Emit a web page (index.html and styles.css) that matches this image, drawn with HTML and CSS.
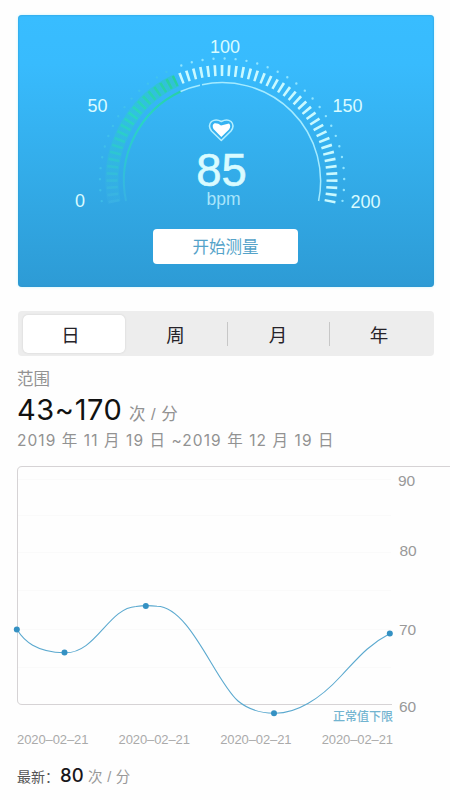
FILE: index.html
```html
<!DOCTYPE html>
<html lang="zh-CN">
<head>
<meta charset="utf-8">
<title>心率</title>
<link rel="stylesheet" href="styles.css">
</head>
<body>
<main class="page">
  <section class="card">
    <svg class="gauge" viewBox="18 15 416 214" width="416" height="214">
      <defs>
        <linearGradient id="fade" gradientUnits="userSpaceOnUse" x1="110" y1="205" x2="176" y2="80">
          <stop offset="0" stop-color="#3fb4e6" stop-opacity=".5"/>
          <stop offset=".3" stop-color="#2ec4d4"/>
          <stop offset=".65" stop-color="#29d6c2"/>
          <stop offset="1" stop-color="#27cfa0"/>
        </linearGradient>
      </defs>
      <path class="band" d="M114.2 202.4A110 110 0 0 1 176.3 80.4"/>
      <path class="ticks ticks-on" d="M114.2 202.4A110 110 0 0 1 176.3 80.4"/>
      <path class="ticks" d="M180.3 78.7A110 110 0 0 1 329.8 202.4"/>
      <path class="dots dots-on" d="M101.7 201.1A122 122 0 0 1 171 69.7"/>
      <path class="dots" d="M181.3 65.5A122 122 0 0 1 342.4 201.4"/>
      <path class="arc arc-on" d="M126 201A98.5 98.5 0 0 1 180.6 91.5"/>
      <path class="arc" d="M180.6 91.5A98.5 98.5 0 0 1 200 85.2"/>
      <path class="arc" d="M202 84.7A98.5 98.5 0 0 1 318.6 201"/>
      <text class="mark" x="80" y="207">0</text>
      <text class="mark" x="97.5" y="111.5">50</text>
      <text class="mark" x="225" y="53">100</text>
      <text class="mark" x="347.5" y="111.5">150</text>
      <text class="mark" x="365.5" y="208">200</text>
      <path class="heart-line" d="M221.3 140.5L211.5 131Q207.500 125.500 211.500 121.500Q216 118.300 221.300 121.500Q227 118.300 231 121.500Q235 125.500 231 131Z"/>
      <path class="heart" d="M221.300 137L213.500 129Q211.500 125 214.500 123.200Q218 122.800 221 125.500Q225 124.500 229 123.500Q231.500 126 229 129.500Z"/>
      <text class="value" x="221.500" y="185.500">85</text>
      <text class="unit" x="223.500" y="204.500">bpm</text>
    </svg>
    <button class="start">开始测量</button>
  </section>

  <nav class="tabs">
    <span class="tab active">日</span>
    <span class="tab">周</span>
    <span class="tab divided">月</span>
    <span class="tab divided">年</span>
  </nav>

  <section class="summary">
    <div class="label">范围</div>
    <div class="range"><span class="num">43~170</span><span class="per">次 / 分</span></div>
    <div class="period">2019 年 11 月 19 日 ~2019 年 12 月 19 日</div>
  </section>

  <svg class="chart" viewBox="0 460 450 270" width="450" height="270">
    <path class="grid" d="M18 479.500H391M18 515.500H391M18 552.500H391M18 590.500H391M18 629.500H391M18 667.500H391"/>
    <path class="frame" d="M450 466.500H22Q17.500 466.500 17.500 471V700Q17.500 704.500 22 704.500H392"/>
    <path class="line" d="M17 629.500C24 641 36 652 64.500 652.800C96 654 108 608 136 606.500C142 605.500 150 605.300 157 606.300C190 607 215 681 238 701C247 708.500 260 713 274 713.300C296 714 320 699 341 676C358 658 368 645 390 633.500"/>
    <g class="points">
      <circle cx="16.800" cy="629.500" r="3"/><circle cx="64.500" cy="652.500" r="3"/><circle cx="145.800" cy="606" r="3"/><circle cx="274" cy="713.300" r="3"/><circle cx="389.800" cy="633.500" r="3"/>
    </g>
    <text class="axis" x="398" y="486">90</text>
    <text class="axis" x="399.500" y="556">80</text>
    <text class="axis" x="399" y="634.500">70</text>
    <text class="axis" x="399" y="711.500">60</text>
    <text class="limit" x="333" y="721" textLength="60">正常值下限</text>
  </svg>
  <div class="dates"><span>2020–02–21</span><span>2020–02–21</span><span>2020–02–21</span><span>2020–02–21</span></div>
  <div class="latest"><span class="key">最新：</span><span class="now">80</span><span class="per-small">次 / 分</span></div>
</main>
</body>
</html>
```
FILE: styles.css
```css
* { box-sizing: border-box; }
body { margin: 0; background: #fefefe; font-family: "Liberation Sans", "Noto Sans CJK SC", sans-serif; }
.page { width: 450px; height: 800px; overflow: hidden; padding-top: 15px; }
.card {
  width: 416px; height: 272px; margin-left: 17.500px; border-radius: 4px;
  display: flex; flex-direction: column; align-items: center;
  background: linear-gradient(#38bdff 0%, #38bbfd 18%, #33ace9 58%, #2d9bd5 100%);
  box-shadow: 0 0 3px #c7f5ff, inset 0 0 2px #2d91c8;
}
.gauge { display: block; flex: none; }
.gauge path { fill: none; }
.gauge text { text-anchor: middle; fill: #d9fbff; }
.gauge .band { stroke: url(#fade); stroke-width: 13; opacity: .4; }
.ticks { stroke: #c9f9ff; stroke-width: 11; stroke-dasharray: 2.600 4.310; }
.ticks-on { stroke: url(#fade); }
.dots { stroke: #8fe4ff; stroke-width: 2.400; stroke-linecap: round; stroke-dasharray: 0 11.030; }
.dots-on { stroke: #45c8e9; opacity: .6; }
.arc { stroke: #a5ebff; stroke-width: 1.500; }
.arc-on { stroke: url(#fade); stroke-width: 2; }
.mark { font-size: 18px; }
.gauge .value { font-size: 45.500px; stroke: #d9fbff; stroke-width: .6; }
.gauge .unit { font-size: 17.500px; fill: #a9e5fb; }
.gauge .heart-line { stroke: #b5efff; stroke-width: 1.500; stroke-linejoin: round; }
.gauge .heart { fill: #fff; }
.start {
  width: 145px; height: 35px; padding: 0 0 1px; border: 0; border-radius: 4px;
  background: #fff; color: #55a3c9; font: 16.500px "Noto Sans CJK SC", sans-serif;
}
.tabs {
  width: 416px; height: 45px; margin: 24px 0 0 17.500px; padding: 4px 5px; border-radius: 4px;
  display: grid; grid-template-columns: 102px 102px 102px 1fr; align-items: center; background: #ededed;
}
.tab {
  height: 24px; display: flex; align-items: center; justify-content: center;
  color: #262329; font: 18.500px/24px "Noto Sans CJK SC", sans-serif;
}
.active { height: 38px; padding-right: 6px; background: #fff; border-radius: 5px; box-shadow: 0 0 2px #ccc; }
.divided { border-left: 1px solid #c7c7c7; }
.summary { padding-left: 17px; color: #929292; }
.label { height: 33px; padding-top: 11px; font: 16.500px/22px "Noto Sans CJK SC", sans-serif; }
.range { height: 38px; display: flex; align-items: baseline; line-height: 42px; }
.num { width: 112px; font-family: Inter, sans-serif; font-size: 29px; letter-spacing: .600px; color: #111; }
.per { font-size: 16.500px; letter-spacing: .500px; }
.period {
  height: 33px; padding-top: 2px; white-space: nowrap; letter-spacing: 1.070px;
  font: 15.500px/24px Inter, "Noto Sans CJK SC", sans-serif;
}
.chart { display: block; }
.grid { fill: none; stroke: #fafafa; }
.frame { fill: none; stroke: #d6d3d5; }
.line { fill: none; stroke: #5ba9cf; stroke-width: 1.100; }
.points { fill: #3491c3; }
.axis { font-size: 15.500px; fill: #999; }
.limit { font: 500 12px "Noto Sans CJK SC", sans-serif; fill: #72b4d0; }
.dates { width: 376px; margin-left: 17px; display: flex; justify-content: space-between; font-size: 13px; line-height: 20px; color: #aaa; letter-spacing: -.100px; }
.latest { display: flex; align-items: baseline; padding: 10px 0 0 17px; line-height: 30px; }
.key { width: 43px; white-space: nowrap; font: 14px "Noto Sans CJK SC", sans-serif; color: #555; }
.now { width: 28px; font-family: Inter, sans-serif; font-size: 18.500px; font-weight: 500; color: #19171c; }
.per-small { font-size: 14.500px; letter-spacing: .300px; color: #999; }
```
